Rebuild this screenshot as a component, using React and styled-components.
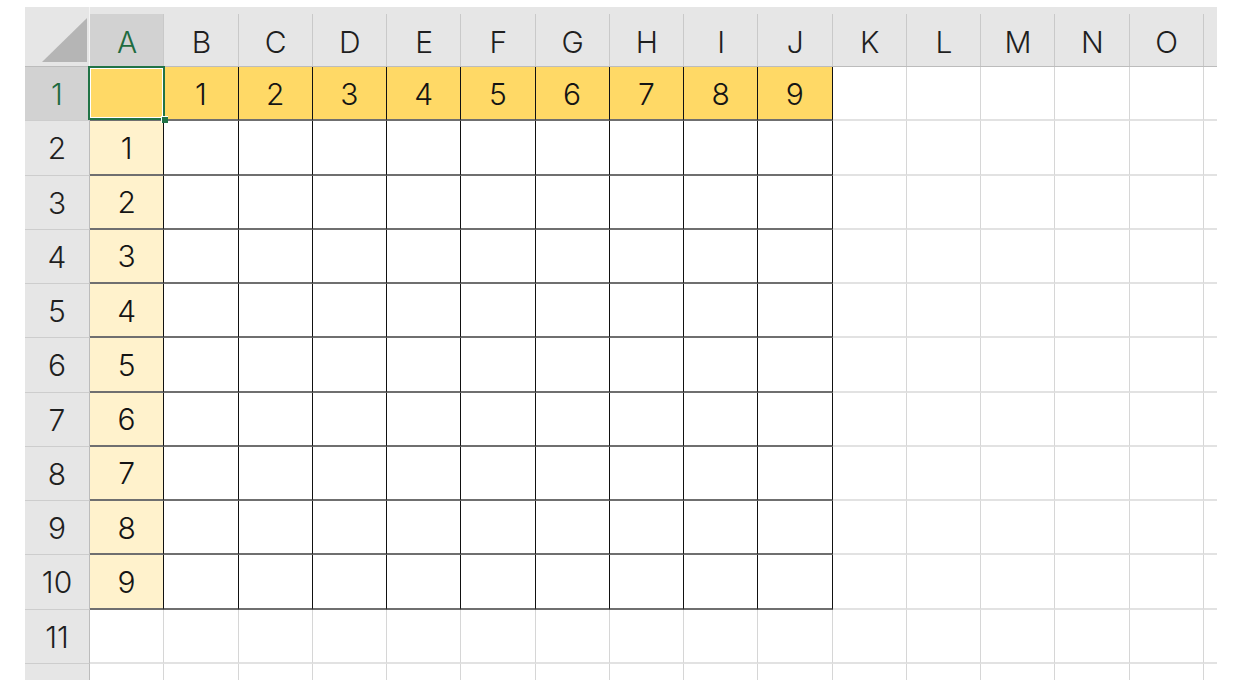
import React from "react";
import styled, { createGlobalStyle, css } from "styled-components";

const COLUMNS = "ABCDEFGHIJKLMNO".split("");
const ROW_COUNT = 12;
const SELECTED_COL = 0;
const SELECTED_ROW = 1;

const GlobalStyle = createGlobalStyle`
  html, body {
    margin: 0;
    padding: 0;
    background: #ffffff;
  }
  body {
    font-family: Inter, "Noto Sans", "Noto Sans CJK JP", sans-serif;
  }
`;

// which kind of cell sits at (row, col)
function cellKind(row, col) {
  const inTable = row <= 10 && col <= 9;
  if (!inTable) return { tone: "plain", text: "" };
  if (row === 1 && col === 0) return { tone: "gold", text: "" };
  if (row === 1) return { tone: "gold", text: String(col) };
  if (col === 0) return { tone: "cream", text: String(row - 1) };
  return { tone: "white", text: "" };
}

function App() {
  return (
    <>
      <GlobalStyle />
      <Sheet>
        <Corner>
          <CornerTriangle />
        </Corner>
        {COLUMNS.map((letter, i) => (
          <ColHeader key={letter} $selected={i === SELECTED_COL}>
            {letter}
          </ColHeader>
        ))}
        <ColHeader $last />

        {Array.from({ length: ROW_COUNT }, (_, r) => {
          const row = r + 1;
          return (
            <React.Fragment key={row}>
              <RowHeader $selected={row === SELECTED_ROW}>{row}</RowHeader>
              {COLUMNS.map((letter, col) => {
                const { tone, text } = cellKind(row, col);
                const isActive = row === SELECTED_ROW && col === SELECTED_COL;
                return (
                  <Cell key={letter} $tone={tone}>
                    {text}
                    {isActive && (
                      <Selection>
                        <FillHandle />
                      </Selection>
                    )}
                  </Cell>
                );
              })}
              <Cell $tone="plain" $last />
            </React.Fragment>
          );
        })}
      </Sheet>
    </>
  );
}

export default App;

const Sheet = styled.div`
  margin: 7px 0 0 25px;
  width: 1192px;
  height: 673px;
  overflow: hidden;
  display: grid;
  grid-template-columns: 65px repeat(15, 74.25px) 1fr;
  grid-template-rows: 60px repeat(12, 54.25px);
  background: #ffffff;
`;

const headerText = css`
  font-size: 30px;
  font-weight: 300;
  line-height: 1;
  color: #1f1f1f;
  display: flex;
  align-items: center;
  justify-content: center;
  box-sizing: border-box;
`;

const Corner = styled.div`
  background: #e6e6e6;
  border-bottom: 1px solid #bcbcbc;
  border-right: 1px solid #f4f4f4;
  box-sizing: border-box;
  display: flex;
  align-items: flex-end;
  justify-content: flex-end;
  padding: 0 2px 4px 0;
`;

const CornerTriangle = styled.div`
  width: 45px;
  height: 44px;
  background: #b5b5b5;
  clip-path: polygon(100% 0, 100% 100%, 0 100%);
`;

const ColHeader = styled.div`
  ${headerText};
  position: relative;
  padding-top: 10px;
  border-bottom: 1px solid #bcbcbc;
  background: ${(p) =>
    p.$selected
      ? "linear-gradient(to bottom, #e6e6e6 7px, #d2d2d2 7px)"
      : "#e6e6e6"};
  color: ${(p) => (p.$selected ? "#1e6b3f" : "#1f1f1f")};

  &::after {
    content: "";
    display: ${(p) => (p.$last ? "none" : "block")};
    position: absolute;
    right: 0;
    top: 7px;
    bottom: 0;
    width: 1px;
    background: #c9c9c9;
  }
`;

const RowHeader = styled.div`
  ${headerText};
  padding-top: 1px;
  border-right: 1px solid #bcbcbc;
  border-bottom: 1px solid #cdcdcd;
  background: ${(p) => (p.$selected ? "#d2d2d2" : "#e6e6e6")};
  color: ${(p) => (p.$selected ? "#1e6b3f" : "#1f1f1f")};
`;

const TONES = {
  gold: { bg: "#ffd966", right: "#111111", bottom: "#6f6f6f" },
  cream: { bg: "#fff2cc", right: "#111111", bottom: "#6f6f6f" },
  white: { bg: "#ffffff", right: "#111111", bottom: "#6f6f6f" },
  plain: { bg: "#ffffff", right: "#d6d6d6", bottom: "#e2e2e2" },
};

const Cell = styled.div`
  position: relative;
  box-sizing: border-box;
  display: flex;
  align-items: center;
  justify-content: center;
  padding-top: 1px;
  font-size: 30px;
  font-weight: 300;
  line-height: 1;
  color: #141414;
  background: ${(p) => TONES[p.$tone].bg};
  border-right: ${(p) => (p.$last ? "none" : `1px solid ${TONES[p.$tone].right}`)};
  border-bottom: 2px solid ${(p) => TONES[p.$tone].bottom};
`;

const Selection = styled.div`
  position: absolute;
  left: -2px;
  top: -1px;
  right: -2px;
  bottom: -1px;
  border: 2px solid #217346;
  box-shadow: inset 0 0 0 1px #ffffff;
  z-index: 2;
  pointer-events: none;
`;

const FillHandle = styled.div`
  position: absolute;
  right: -5px;
  bottom: -5px;
  width: 6px;
  height: 6px;
  background: #217346;
  border: 1px solid #ffffff;
  border-width: 1px 0 0 1px;
`;
